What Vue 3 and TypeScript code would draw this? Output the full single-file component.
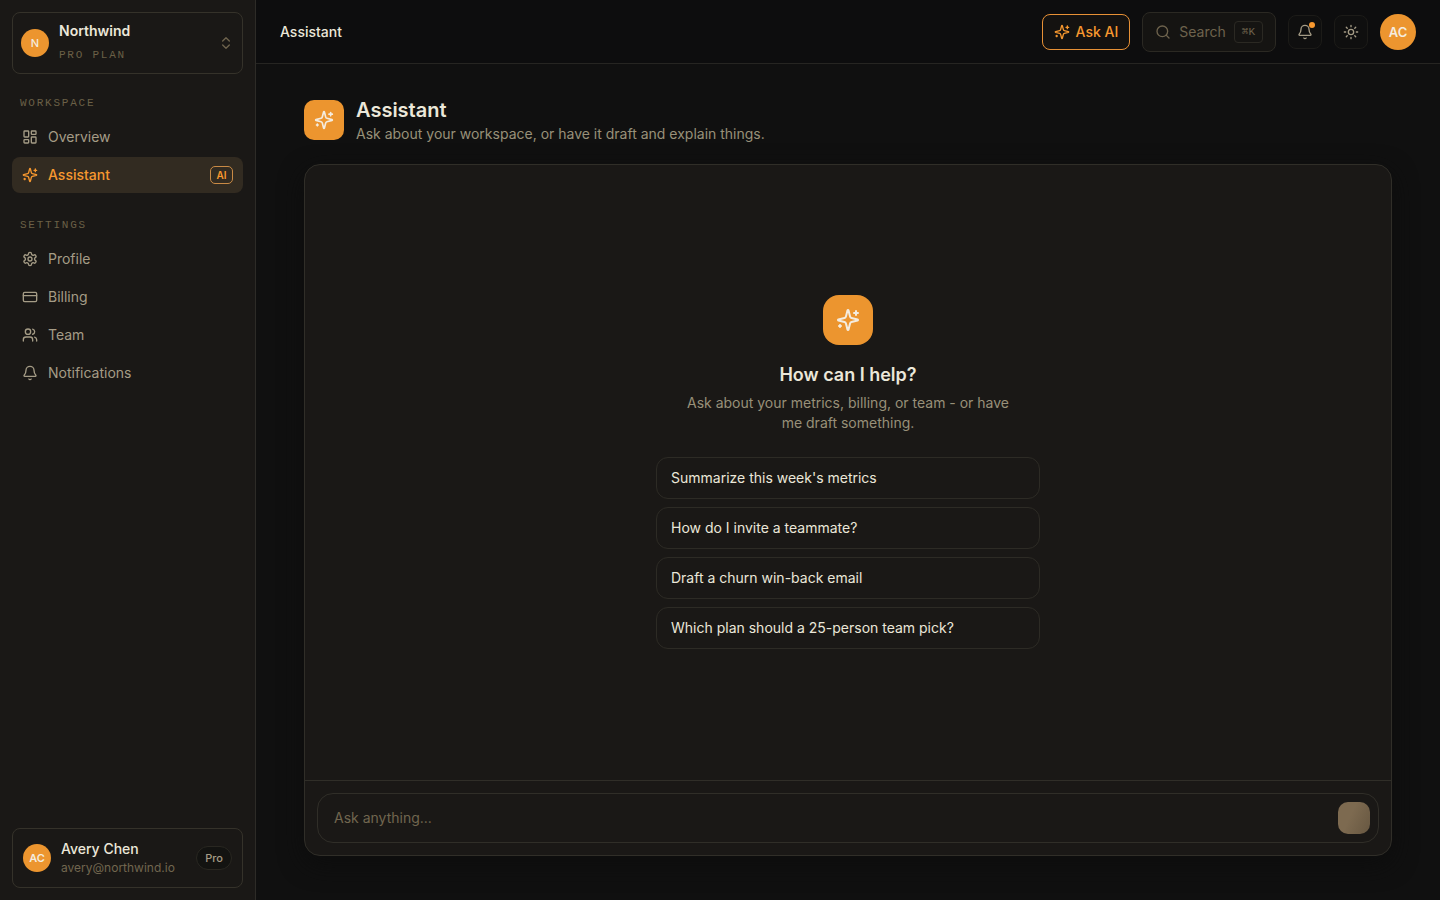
<script setup lang="ts">
import { ref } from 'vue'

type Shape = { d: string }

const icons: Record<string, Shape[]> = {
  overview: [
    { d: 'M4 3h5a1 1 0 0 1 1 1v7a1 1 0 0 1-1 1H4a1 1 0 0 1-1-1V4a1 1 0 0 1 1-1z' },
    { d: 'M15 3h5a1 1 0 0 1 1 1v3a1 1 0 0 1-1 1h-5a1 1 0 0 1-1-1V4a1 1 0 0 1 1-1z' },
    { d: 'M15 12h5a1 1 0 0 1 1 1v7a1 1 0 0 1-1 1h-5a1 1 0 0 1-1-1v-7a1 1 0 0 1 1-1z' },
    { d: 'M4 16h5a1 1 0 0 1 1 1v3a1 1 0 0 1-1 1H4a1 1 0 0 1-1-1v-3a1 1 0 0 1 1-1z' },
  ],
  sparkles: [
    { d: 'M9.937 15.5A2 2 0 0 0 8.5 14.063l-6.135-1.582a.5.5 0 0 1 0-.962L8.5 9.936A2 2 0 0 0 9.937 8.5l1.582-6.135a.5.5 0 0 1 .963 0L14.063 8.5A2 2 0 0 0 15.5 9.937l6.135 1.581a.5.5 0 0 1 0 .964L15.5 14.063a2 2 0 0 0-1.437 1.437l-1.582 6.135a.5.5 0 0 1-.963 0z' },
    { d: 'M20 3v4M22 5h-4M4 17v2M5 18H3' },
  ],
  settings: [
    { d: 'M12.22 2h-.44a2 2 0 0 0-2 2v.18a2 2 0 0 1-1 1.73l-.43.25a2 2 0 0 1-2 0l-.15-.08a2 2 0 0 0-2.73.73l-.22.38a2 2 0 0 0 .73 2.73l.15.1a2 2 0 0 1 1 1.72v.51a2 2 0 0 1-1 1.74l-.15.09a2 2 0 0 0-.73 2.73l.22.38a2 2 0 0 0 2.73.73l.15-.08a2 2 0 0 1 2 0l.43.25a2 2 0 0 1 1 1.73V20a2 2 0 0 0 2 2h.44a2 2 0 0 0 2-2v-.18a2 2 0 0 1 1-1.73l.43-.25a2 2 0 0 1 2 0l.15.08a2 2 0 0 0 2.73-.73l.22-.39a2 2 0 0 0-.73-2.73l-.15-.08a2 2 0 0 1-1-1.74v-.5a2 2 0 0 1 1-1.74l.15-.09a2 2 0 0 0 .73-2.73l-.22-.38a2 2 0 0 0-2.73-.73l-.15.08a2 2 0 0 1-2 0l-.43-.25a2 2 0 0 1-1-1.73V4a2 2 0 0 0-2-2z' },
    { d: 'M15 12a3 3 0 1 1-6 0 3 3 0 0 1 6 0z' },
  ],
  card: [
    { d: 'M4 5h16a2 2 0 0 1 2 2v10a2 2 0 0 1-2 2H4a2 2 0 0 1-2-2V7a2 2 0 0 1 2-2z' },
    { d: 'M2 10h20' },
  ],
  users: [
    { d: 'M16 21v-2a4 4 0 0 0-4-4H6a4 4 0 0 0-4 4v2' },
    { d: 'M13 7a4 4 0 1 1-8 0 4 4 0 0 1 8 0z' },
    { d: 'M22 21v-2a4 4 0 0 0-3-3.87M16 3.13a4 4 0 0 1 0 7.75' },
  ],
  bell: [
    { d: 'M10.268 21a2 2 0 0 0 3.464 0' },
    { d: 'M3.262 15.326A1 1 0 0 0 4 17h16a1 1 0 0 0 .74-1.673C19.41 13.956 18 12.499 18 8A6 6 0 0 0 6 8c0 4.499-1.411 5.956-2.738 7.326' },
  ],
  search: [{ d: 'M19 11a8 8 0 1 1-16 0 8 8 0 0 1 16 0z' }, { d: 'm21 21-4.3-4.3' }],
  sun: [
    { d: 'M16 12a4 4 0 1 1-8 0 4 4 0 0 1 8 0z' },
    { d: 'M12 2v2M12 20v2M4.93 4.93l1.41 1.41M17.66 17.66l1.41 1.41M2 12h2M20 12h2M6.34 17.66l-1.41 1.41M19.07 4.93l-1.41 1.41' },
  ],
  chevrons: [{ d: 'm7 15 5 5 5-5M7 9l5-5 5 5' }],
}

const groups = [
  {
    title: 'Workspace',
    items: [
      { label: 'Overview', icon: 'overview' },
      { label: 'Assistant', icon: 'sparkles', active: true, badge: 'AI' },
    ],
  },
  {
    title: 'Settings',
    items: [
      { label: 'Profile', icon: 'settings' },
      { label: 'Billing', icon: 'card' },
      { label: 'Team', icon: 'users' },
      { label: 'Notifications', icon: 'bell' },
    ],
  },
] as { title: string; items: { label: string; icon: string; active?: boolean; badge?: string }[] }[]

const prompts = [
  "Summarize this week's metrics",
  'How do I invite a teammate?',
  'Draft a churn win-back email',
  'Which plan should a 25-person team pick?',
]

const message = ref('')
</script>

<template>
  <div class="shell">
    <aside class="sidebar">
      <button class="workspace" type="button">
        <span class="avatar small light">N</span>
        <span class="workspace-text">
          <span class="workspace-name">Northwind</span>
          <span class="eyebrow">Pro plan</span>
        </span>
        <svg class="icon chevrons" viewBox="0 0 24 24"><path v-for="s in icons.chevrons" :key="s.d" :d="s.d" /></svg>
      </button>

      <nav class="nav">
        <section v-for="group in groups" :key="group.title" class="group">
          <h2 class="eyebrow group-title">{{ group.title }}</h2>
          <a v-for="item in group.items" :key="item.label" href="#" class="item" :class="{ active: item.active }">
            <svg class="icon" viewBox="0 0 24 24"><path v-for="s in icons[item.icon]" :key="s.d" :d="s.d" /></svg>
            <span>{{ item.label }}</span>
            <span v-if="item.badge" class="badge">{{ item.badge }}</span>
          </a>
        </section>
      </nav>

      <div class="account">
        <span class="avatar small">AC</span>
        <span class="account-text">
          <span class="account-name">Avery Chen</span>
          <span class="account-mail">avery@northwind.io</span>
        </span>
        <span class="plan">Pro</span>
      </div>
    </aside>

    <div class="content">
      <header class="topbar">
        <span class="crumb">Assistant</span>
        <div class="actions">
          <button class="ask" type="button">
            <svg class="icon" viewBox="0 0 24 24"><path v-for="s in icons.sparkles" :key="s.d" :d="s.d" /></svg>
            Ask AI
          </button>
          <button class="search" type="button">
            <svg class="icon" viewBox="0 0 24 24"><path v-for="s in icons.search" :key="s.d" :d="s.d" /></svg>
            Search
            <kbd>⌘K</kbd>
          </button>
          <button class="square" type="button" aria-label="Notifications">
            <svg class="icon" viewBox="0 0 24 24"><path v-for="s in icons.bell" :key="s.d" :d="s.d" /></svg>
            <span class="dot"></span>
          </button>
          <button class="square" type="button" aria-label="Theme">
            <svg class="icon" viewBox="0 0 24 24"><path v-for="s in icons.sun" :key="s.d" :d="s.d" /></svg>
          </button>
          <button class="avatar large" type="button">AC</button>
        </div>
      </header>

      <main class="main">
        <div class="page-head">
          <span class="tile">
            <svg class="icon" viewBox="0 0 24 24"><path v-for="s in icons.sparkles" :key="s.d" :d="s.d" /></svg>
          </span>
          <div>
            <h1>Assistant</h1>
            <p>Ask about your workspace, or have it draft and explain things.</p>
          </div>
        </div>

        <section class="chat">
          <div class="empty">
            <span class="tile big">
              <svg class="icon" viewBox="0 0 24 24"><path v-for="s in icons.sparkles" :key="s.d" :d="s.d" /></svg>
            </span>
            <h2>How can I help?</h2>
            <p>Ask about your metrics, billing, or team - or have me draft something.</p>
            <div class="prompts">
              <button v-for="p in prompts" :key="p" type="button" @click="message = p">{{ p }}</button>
            </div>
          </div>
          <form class="composer" @submit.prevent>
            <div class="field">
              <input v-model="message" type="text" placeholder="Ask anything..." aria-label="Message" />
              <button class="send" type="submit" aria-label="Send"></button>
            </div>
          </form>
        </section>
      </main>
    </div>
  </div>
</template>

<style>
body {
  background: #101010;
}
</style>

<style scoped>
.shell,
.shell * {
  box-sizing: border-box;
}
.shell {
  display: flex;
  min-height: 100vh;
  background: #101010;
  color: #ebe7d9;
  font-family: Inter, "Liberation Sans", sans-serif;
  font-size: 14px;
  line-height: 20px;
}
h1,
h2,
p {
  margin: 0;
}
button,
input,
kbd {
  font: inherit;
  color: inherit;
}
button {
  padding: 0;
  border: 0;
  background: none;
  cursor: pointer;
}
.icon {
  width: 16px;
  height: 16px;
  flex: none;
  fill: none;
  stroke: currentColor;
  stroke-width: 2;
  stroke-linecap: round;
  stroke-linejoin: round;
}
.avatar {
  display: flex;
  flex: none;
  align-items: center;
  justify-content: center;
  border-radius: 50%;
  background: #ec952f;
  color: #f4ecdf;
  font-weight: 600;
}
.avatar.small {
  width: 28px;
  height: 28px;
  font-size: 11px;
}
.avatar.light {
  font-weight: 500;
}
.avatar.large {
  width: 36px;
  height: 36px;
  font-size: 13px;
}
.eyebrow {
  color: #6b6047;
  font-family: "Liberation Mono", monospace;
  font-size: 11px;
  font-weight: 400;
  line-height: 16px;
  letter-spacing: 0.16em;
  text-transform: uppercase;
}

.sidebar {
  display: flex;
  flex: none;
  flex-direction: column;
  width: 256px;
  padding: 12px;
  border-right: 1px solid #2d2b27;
  background: #1a1816;
}
.workspace {
  display: flex;
  align-items: center;
  gap: 10px;
  height: 62px;
  padding: 0 8px;
  border: 1px solid #35322a;
  border-radius: 8px;
  text-align: left;
}
.workspace-text {
  display: flex;
  flex: 1;
  flex-direction: column;
  gap: 6px;
  padding-bottom: 2px;
}
.workspace-name {
  font-weight: 600;
}
.chevrons {
  color: #6e634d;
}
.nav {
  display: flex;
  flex: 1;
  flex-direction: column;
  gap: 24px;
  margin-top: 21px;
}
.group {
  display: flex;
  flex-direction: column;
  gap: 2px;
}
.group-title {
  padding: 0 8px;
  margin-bottom: 6px;
}
.item {
  display: flex;
  align-items: center;
  gap: 10px;
  height: 36px;
  padding: 0 10px;
  border-radius: 8px;
  color: #a59c86;
  text-decoration: none;
}
.item.active {
  background: #322b21;
  color: #f7982f;
  font-weight: 500;
}
.badge {
  margin-left: auto;
  width: 23px;
  border: 1px solid #c98a45;
  border-radius: 5px;
  font-size: 10px;
  line-height: 16px;
  font-weight: 600;
  text-align: center;
}
.account {
  display: flex;
  align-items: center;
  gap: 10px;
  height: 60px;
  padding: 0 10px;
  border: 1px solid #35322a;
  border-radius: 8px;
}
.account-text {
  display: flex;
  flex: 1;
  flex-direction: column;
}
.account-name {
  font-weight: 500;
}
.account-mail {
  color: #71664f;
  font-size: 12px;
  line-height: 18px;
}
.plan {
  padding: 0 8px;
  border: 1px solid #292721;
  border-radius: 12px;
  background: #131311;
  color: #a59c86;
  font-size: 11px;
  font-weight: 500;
  line-height: 22px;
}

.content {
  display: flex;
  flex: 1;
  flex-direction: column;
  min-width: 0;
}
.topbar {
  display: flex;
  align-items: center;
  justify-content: space-between;
  height: 64px;
  padding: 0 24px;
  border-bottom: 1px solid #262522;
  background: #0d0d0e;
}
.crumb {
  font-weight: 500;
}
.actions {
  display: flex;
  align-items: center;
  gap: 12px;
}
.ask {
  display: flex;
  align-items: center;
  gap: 6px;
  height: 36px;
  padding: 0 11px;
  border: 1px solid #e89136;
  border-radius: 8px;
  background: #141210;
  color: #f7982f;
  font-weight: 500;
}
.search {
  display: flex;
  align-items: center;
  gap: 8px;
  height: 40px;
  padding: 0 12px;
  border: 1px solid #2b2923;
  border-radius: 8px;
  background: #151412;
  color: #6e634d;
}
.search kbd {
  padding: 0 7px;
  border: 1px solid #2b2923;
  border-radius: 4px;
  font-family: "Liberation Mono", "DejaVu Sans Mono", monospace;
  font-size: 11px;
  line-height: 20px;
}
.square {
  position: relative;
  display: flex;
  align-items: center;
  justify-content: center;
  width: 34px;
  height: 34px;
  border: 1px solid #1c1b18;
  border-radius: 8px;
  background: #0f0f0f;
  color: #a59c86;
}
.dot {
  position: absolute;
  top: 6px;
  right: 6px;
  width: 6px;
  height: 6px;
  border-radius: 50%;
  background: #f7982f;
}

.main {
  display: flex;
  flex: 1;
  flex-direction: column;
  gap: 20px;
  padding: 32px 48px 44px;
}
.page-head {
  display: flex;
  align-items: center;
  gap: 12px;
}
.tile {
  display: flex;
  flex: none;
  align-items: center;
  justify-content: center;
  width: 40px;
  height: 40px;
  border-radius: 10px;
  background: #ec952f;
  color: #f4ecdf;
}
.tile .icon {
  width: 20px;
  height: 20px;
}
.tile.big {
  width: 50px;
  height: 50px;
  border-radius: 16px;
}
.tile.big .icon {
  width: 24px;
  height: 24px;
}
h1 {
  font-size: 20px;
  font-weight: 600;
  line-height: 28px;
}
.page-head p,
.empty p {
  color: #989079;
}
.chat {
  display: flex;
  flex: 1;
  flex-direction: column;
  border: 1px solid #302e28;
  border-radius: 16px;
  background: #1a1816;
  box-shadow: 0 8px 24px #0d0d0d;
}
.empty {
  display: flex;
  flex: 1;
  flex-direction: column;
  align-items: center;
  justify-content: center;
  padding: 24px 24px 26px;
  text-align: center;
}
.empty h2 {
  margin-top: 16px;
  font-size: 18px;
  font-weight: 600;
  line-height: 28px;
}
.empty p {
  max-width: 336px;
  margin-top: 4px;
}
.prompts {
  display: flex;
  flex-direction: column;
  gap: 8px;
  width: 100%;
  max-width: 384px;
  margin-top: 24px;
}
.prompts button {
  height: 42px;
  padding: 0 14px;
  border: 1px solid #2d2b25;
  border-radius: 12px;
  text-align: left;
}
.composer {
  padding: 12px;
  border-top: 1px solid #302e28;
}
.field {
  display: flex;
  align-items: center;
  gap: 8px;
  height: 50px;
  padding: 0 8px 0 16px;
  border: 1px solid #302e28;
  border-radius: 16px;
}
.field input {
  flex: 1;
  min-width: 0;
  padding: 0;
  border: 0;
  outline: 0;
  background: none;
}
.field input::placeholder {
  color: #71664f;
  opacity: 1;
}
.send {
  width: 32px;
  height: 32px;
  border-radius: 10px;
  background: linear-gradient(115deg, #7d6a50 40%, #675741);
}
</style>
